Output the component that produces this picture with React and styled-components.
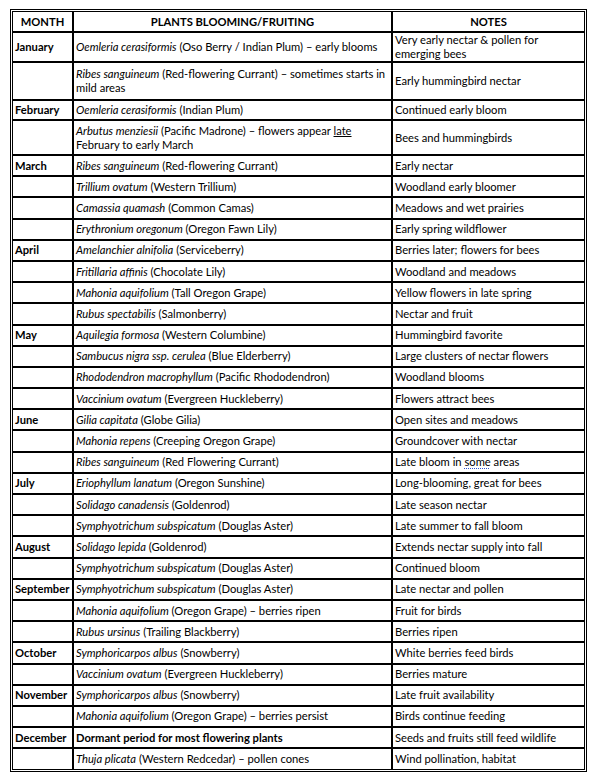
import styled, { createGlobalStyle } from 'styled-components';

const GlobalStyle = createGlobalStyle`
  body {
    margin: 0;
    background: #fff;
    font-family: Lato, "Open Sans", sans-serif;
    color: #000;
  }
`;

const I = styled.i`
  font-style: italic;
`;

const Under = styled.span`
  text-decoration: underline;
`;

const SpellMark = styled.span`
  text-decoration: underline dotted #3355cc;
  text-decoration-thickness: 1px;
  text-underline-offset: 2px;
`;

const rows = [
  { month: 'January', h: 29, plant: <><I>Oemleria cerasiformis</I> (Oso Berry / Indian Plum) – early blooms</>, note: 'Very early nectar & pollen for emerging bees' },
  { h: 38, plant: <><I>Ribes sanguineum</I> (Red-flowering Currant) – sometimes starts in mild areas</>, note: 'Early hummingbird nectar' },
  { month: 'February', h: 20, plant: <><I>Oemleria cerasiformis</I> (Indian Plum)</>, note: 'Continued early bloom' },
  { h: 35, plant: <><I>Arbutus menziesii</I> (Pacific Madrone) – flowers appear <Under>late</Under> February to early March</>, note: 'Bees and hummingbirds' },
  { month: 'March', plant: <><I>Ribes sanguineum</I> (Red-flowering Currant)</>, note: 'Early nectar' },
  { plant: <><I>Trillium ovatum</I> (Western Trillium)</>, note: 'Woodland early bloomer' },
  { plant: <><I>Camassia quamash</I> (Common Camas)</>, note: 'Meadows and wet prairies' },
  { plant: <><I>Erythronium oregonum</I> (Oregon Fawn Lily)</>, note: 'Early spring wildflower' },
  { month: 'April', plant: <><I>Amelanchier alnifolia</I> (Serviceberry)</>, note: 'Berries later; flowers for bees' },
  { plant: <><I>Fritillaria affinis</I> (Chocolate Lily)</>, note: 'Woodland and meadows' },
  { plant: <><I>Mahonia aquifolium</I> (Tall Oregon Grape)</>, note: 'Yellow flowers in late spring' },
  { plant: <><I>Rubus spectabilis</I> (Salmonberry)</>, note: 'Nectar and fruit' },
  { month: 'May', plant: <><I>Aquilegia formosa</I> (Western Columbine)</>, note: 'Hummingbird favorite' },
  { plant: <><I>Sambucus nigra ssp. cerulea</I> (Blue Elderberry)</>, note: 'Large clusters of nectar flowers' },
  { plant: <><I>Rhododendron macrophyllum</I> (Pacific Rhododendron)</>, note: 'Woodland blooms' },
  { plant: <><I>Vaccinium ovatum</I> (Evergreen Huckleberry)</>, note: 'Flowers attract bees' },
  { month: 'June', plant: <><I>Gilia capitata</I> (Globe Gilia)</>, note: 'Open sites and meadows' },
  { plant: <><I>Mahonia repens</I> (Creeping Oregon Grape)</>, note: 'Groundcover with nectar' },
  { plant: <><I>Ribes sanguineum</I> (Red Flowering Currant)</>, note: <>Late bloom in <SpellMark>some</SpellMark> areas</> },
  { month: 'July', plant: <><I>Eriophyllum lanatum</I> (Oregon Sunshine)</>, note: 'Long-blooming, great for bees' },
  { plant: <><I>Solidago canadensis</I> (Goldenrod)</>, note: 'Late season nectar' },
  { plant: <><I>Symphyotrichum subspicatum</I> (Douglas Aster)</>, note: 'Late summer to fall bloom' },
  { month: 'August', plant: <><I>Solidago lepida</I> (Goldenrod)</>, note: 'Extends nectar supply into fall' },
  { plant: <><I>Symphyotrichum subspicatum</I> (Douglas Aster)</>, note: 'Continued bloom' },
  { month: 'September', plant: <> <I>Symphyotrichum subspicatum</I> (Douglas Aster)</>, note: 'Late nectar and pollen' },
  { plant: <><I>Mahonia aquifolium</I> (Oregon Grape) – berries ripen</>, note: 'Fruit for birds' },
  { plant: <><I>Rubus ursinus</I> (Trailing Blackberry)</>, note: 'Berries ripen' },
  { month: 'October', plant: <><I>Symphoricarpos albus</I> (Snowberry)</>, note: 'White berries feed birds' },
  { plant: <><I>Vaccinium ovatum</I> (Evergreen Huckleberry)</>, note: 'Berries mature' },
  { month: 'November', plant: <><I>Symphoricarpos albus</I> (Snowberry)</>, note: 'Late fruit availability' },
  { plant: <><I>Mahonia aquifolium</I> (Oregon Grape) – berries persist</>, note: 'Birds continue feeding' },
  { month: 'December', plant: <b>Dormant period for most flowering plants</b>, note: 'Seeds and fruits still feed wildlife' },
  { plant: <><I>Thuja plicata</I> (Western Redcedar) – pollen cones</>, note: 'Wind pollination, habitat' },
];

const App = () => {
  return (
    <>
      <GlobalStyle />
      <Page>
        <Frame>
          <Table>
            <colgroup>
              <col style={{ width: 60 }} />
              <col style={{ width: 319 }} />
              <col style={{ width: 192 }} />
            </colgroup>
            <thead>
              <Row $h={20}>
                <HeadCell>MONTH</HeadCell>
                <HeadCell>PLANTS BLOOMING/FRUITING</HeadCell>
                <HeadCell>NOTES</HeadCell>
              </Row>
            </thead>
            <tbody>
              {rows.map((r, i) => (
                <Row key={i} $h={r.h || 21.2}>
                  <MonthCell>{r.month}</MonthCell>
                  <Cell>{r.plant}</Cell>
                  <Cell>{r.note}</Cell>
                </Row>
              ))}
            </tbody>
          </Table>
        </Frame>
      </Page>
    </>
  );
};

export default App;

const Page = styled.div`
  padding: 9px 9px 0 10px;
`;

const Frame = styled.div`
  width: 577px;
  box-sizing: border-box;
  border: 3px double #000;
`;

const Table = styled.table`
  width: 571px;
  table-layout: fixed;
  border-collapse: collapse;
  border-style: hidden;
  font-size: 11.2px;
  line-height: 14px;
`;

const Row = styled.tr`
  height: ${({ $h }) => $h}px;
`;

const Cell = styled.td`
  border: 2px solid #000;
  padding: 0 2px 0 2px;
  vertical-align: middle;
  text-align: left;
`;

const MonthCell = styled(Cell)`
  font-weight: bold;
  white-space: nowrap;
`;

const HeadCell = styled.th`
  border: 2px solid #000;
  padding: 0 2px;
  font-weight: bold;
  text-align: center;
  vertical-align: middle;
`;
